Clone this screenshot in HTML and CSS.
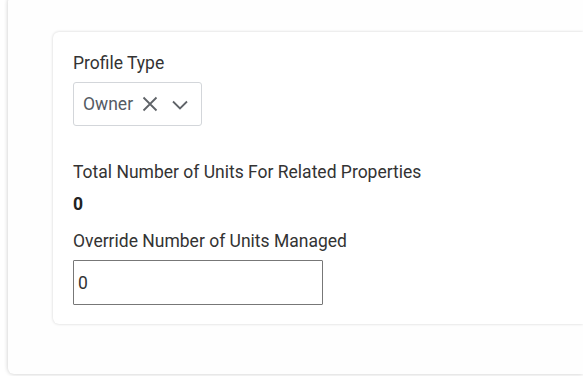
FILE: index.html
```html
<!DOCTYPE html>
<html lang="en">
<head>
<meta charset="UTF-8">
<meta name="viewport" content="width=device-width, initial-scale=1.0">
<title>Profile Settings</title>
<link rel="stylesheet" href="styles.css">
</head>
<body>

<div class="page">
    <div class="panel">
        <div class="card">
            <div class="field">
                <label class="field-label">Profile Type</label>
                <div class="select">
                    <span class="select-value">Owner</span>
                    <span class="select-clear">
                        <svg width="16" height="16" viewBox="0 0 16 16"><path d="M1.5 1.5 L14.5 14.5 M14.5 1.5 L1.5 14.5" stroke="#5f6368" stroke-width="1.8" fill="none"/></svg>
                    </span>
                    <span class="select-arrow">
                        <svg width="16" height="10" viewBox="0 0 16 10"><path d="M1 1.5 L8 8.5 L15 1.5" stroke="#5f6368" stroke-width="1.8" fill="none"/></svg>
                    </span>
                </div>
            </div>

            <div class="field field-total">
                <div class="field-label">Total Number of Units For Related Properties</div>
                <div class="field-value">0</div>
            </div>

            <div class="field">
                <label class="field-label" for="unitsManaged">Override Number of Units Managed</label>
                <input type="text" id="unitsManaged" class="text-input" value="0">
            </div>
        </div>
    </div>
</div>

</body>
</html>
```

FILE: styles.css
```css
body {
    font-family: Roboto, "Liberation Sans", Arial, sans-serif;
    margin: 0;
    padding: 0;
    background-color: #ffffff;
    color: #333333;
    overflow: hidden;
}
.page {
    height: 376px;
    padding: 0 0 0 8px;
    box-sizing: border-box;
    display: flex;
    flex-direction: column;
}
.panel {
    margin-top: -4px;
    height: 378px;
    box-sizing: border-box;
    padding: 36px 0 0 45px;
    background-color: #fefefe;
    border-radius: 6px 0 0 6px;
    box-shadow: 0 0 4px rgba(0, 0, 0, 0.22);
}
.card {
    padding: 19px 20px 19px 20px;
    background-color: #ffffff;
    border-radius: 6px 0 0 6px;
    box-shadow: 0 0 3px rgba(0, 0, 0, 0.18);
}
.field {
    display: flex;
    flex-direction: column;
    align-items: flex-start;
}
.field-label {
    font-size: 17.5px;
    line-height: 24px;
    color: #333333;
}
.select {
    margin-top: 7px;
    height: 44px;
    width: 129px;
    box-sizing: border-box;
    display: flex;
    align-items: center;
    padding-left: 9px;
    border: 1px solid #d3d6da;
    border-radius: 3px;
}
.select-value {
    font-size: 17.5px;
    color: #555b63;
}
.select-clear {
    display: flex;
    margin-left: 9px;
}
.select-arrow {
    display: flex;
    margin-left: 14px;
    margin-top: 1px;
}
.field-total {
    margin-top: 34px;
}
.field-value {
    margin-top: 8px;
    font-size: 17.5px;
    font-weight: bold;
    line-height: 24px;
    color: #222222;
}
.field-total + .field {
    margin-top: 13px;
}
.text-input {
    margin-top: 7px;
    width: 250px;
    height: 45px;
    box-sizing: border-box;
    padding: 0 4px;
    font-family: Roboto, "Liberation Sans", Arial, sans-serif;
    font-size: 17.5px;
    color: #333333;
    border: 1px solid #777777;
    border-radius: 1px;
    outline: none;
}
```
